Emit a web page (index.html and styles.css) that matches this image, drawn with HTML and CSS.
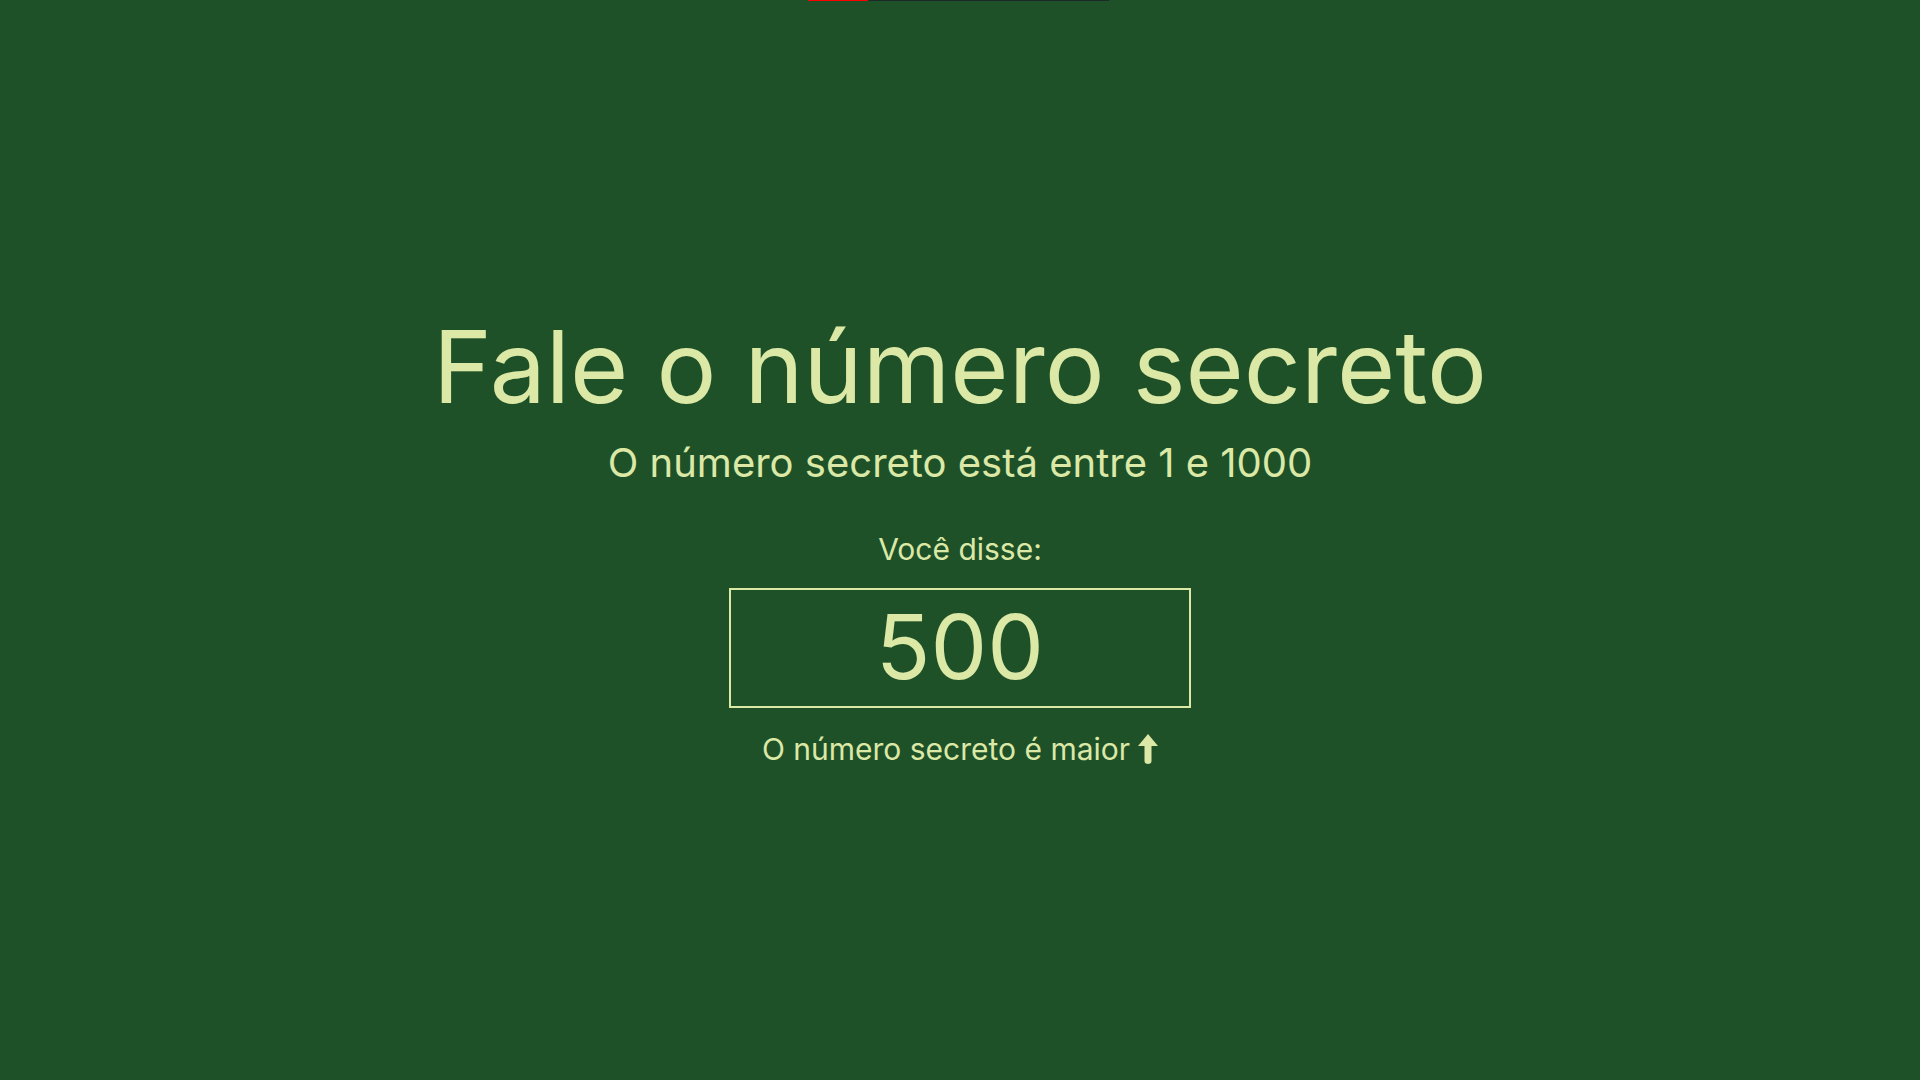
FILE: index.html
```html
<!DOCTYPE html>
<html lang="pt-BR">
<head>
<meta charset="utf-8">
<title>Número secreto</title>
<link rel="stylesheet" href="styles.css">
</head>
<body>
<div class="top-progress"><span class="top-progress__done"></span><span class="top-progress__rest"></span></div>
<main class="game">
  <h1 class="game__title">Fale o número secreto</h1>
  <h3 class="game__subtitle">O número secreto está entre 1 e 1000</h3>
  <div class="guess">
    <div class="guess__label">Você disse:</div>
    <span class="guess__box">500</span>
    <div class="guess__hint">O número secreto é maior
      <svg class="guess__arrow" viewBox="0 0 20 30" width="20" height="30" aria-hidden="true">
        <path d="M10 0 L20 12 L13.5 12 L13.5 27 Q13.5 30 10 30 Q6.5 30 6.5 27 L6.5 12 L0 12 Z" fill="#dbe8a6"/>
      </svg>
    </div>
  </div>
</main>
</body>
</html>
```
FILE: styles.css
```css
* { box-sizing: border-box; }
html, body {
  margin: 0;
  padding: 0;
}
body {
  background: #1f5129;
  color: #dbe8a6;
  font-family: Inter, "Noto Sans", sans-serif;
  min-height: 100vh;
  position: relative;
}
.top-progress {
  position: absolute;
  top: 0;
  left: 808px;
  width: 301px;
  height: 1px;
  display: flex;
}
.top-progress__done {
  width: 60px;
  background: #ff0000;
}
.top-progress__rest {
  flex: 1;
  background: #1c2a2a;
}
.game {
  min-height: 100vh;
  display: flex;
  flex-direction: column;
  align-items: center;
  justify-content: center;
  text-align: center;
  padding-bottom: 6px;
}
.game__title {
  margin: 0;
  font-size: 100px;
  font-weight: 400;
  line-height: 1.2;
}
.game__subtitle {
  margin: 12px 0 0;
  font-size: 40px;
  font-weight: 400;
  line-height: 1.2;
}
.guess {
  display: flex;
  flex-direction: column;
  align-items: center;
  margin-top: 44px;
}
.guess__label {
  font-size: 30px;
  line-height: 1.2;
}
.guess__box {
  display: block;
  margin-top: 21px;
  width: 462px;
  height: 120px;
  border: 2px solid #dbe8a6;
  font-size: 90px;
  line-height: 114px;
}
.guess__hint {
  margin-top: 23px;
  font-size: 30px;
  line-height: 1.2;
  display: flex;
  align-items: center;
  gap: 8px;
}
.guess__arrow {
  display: block;
}
```
